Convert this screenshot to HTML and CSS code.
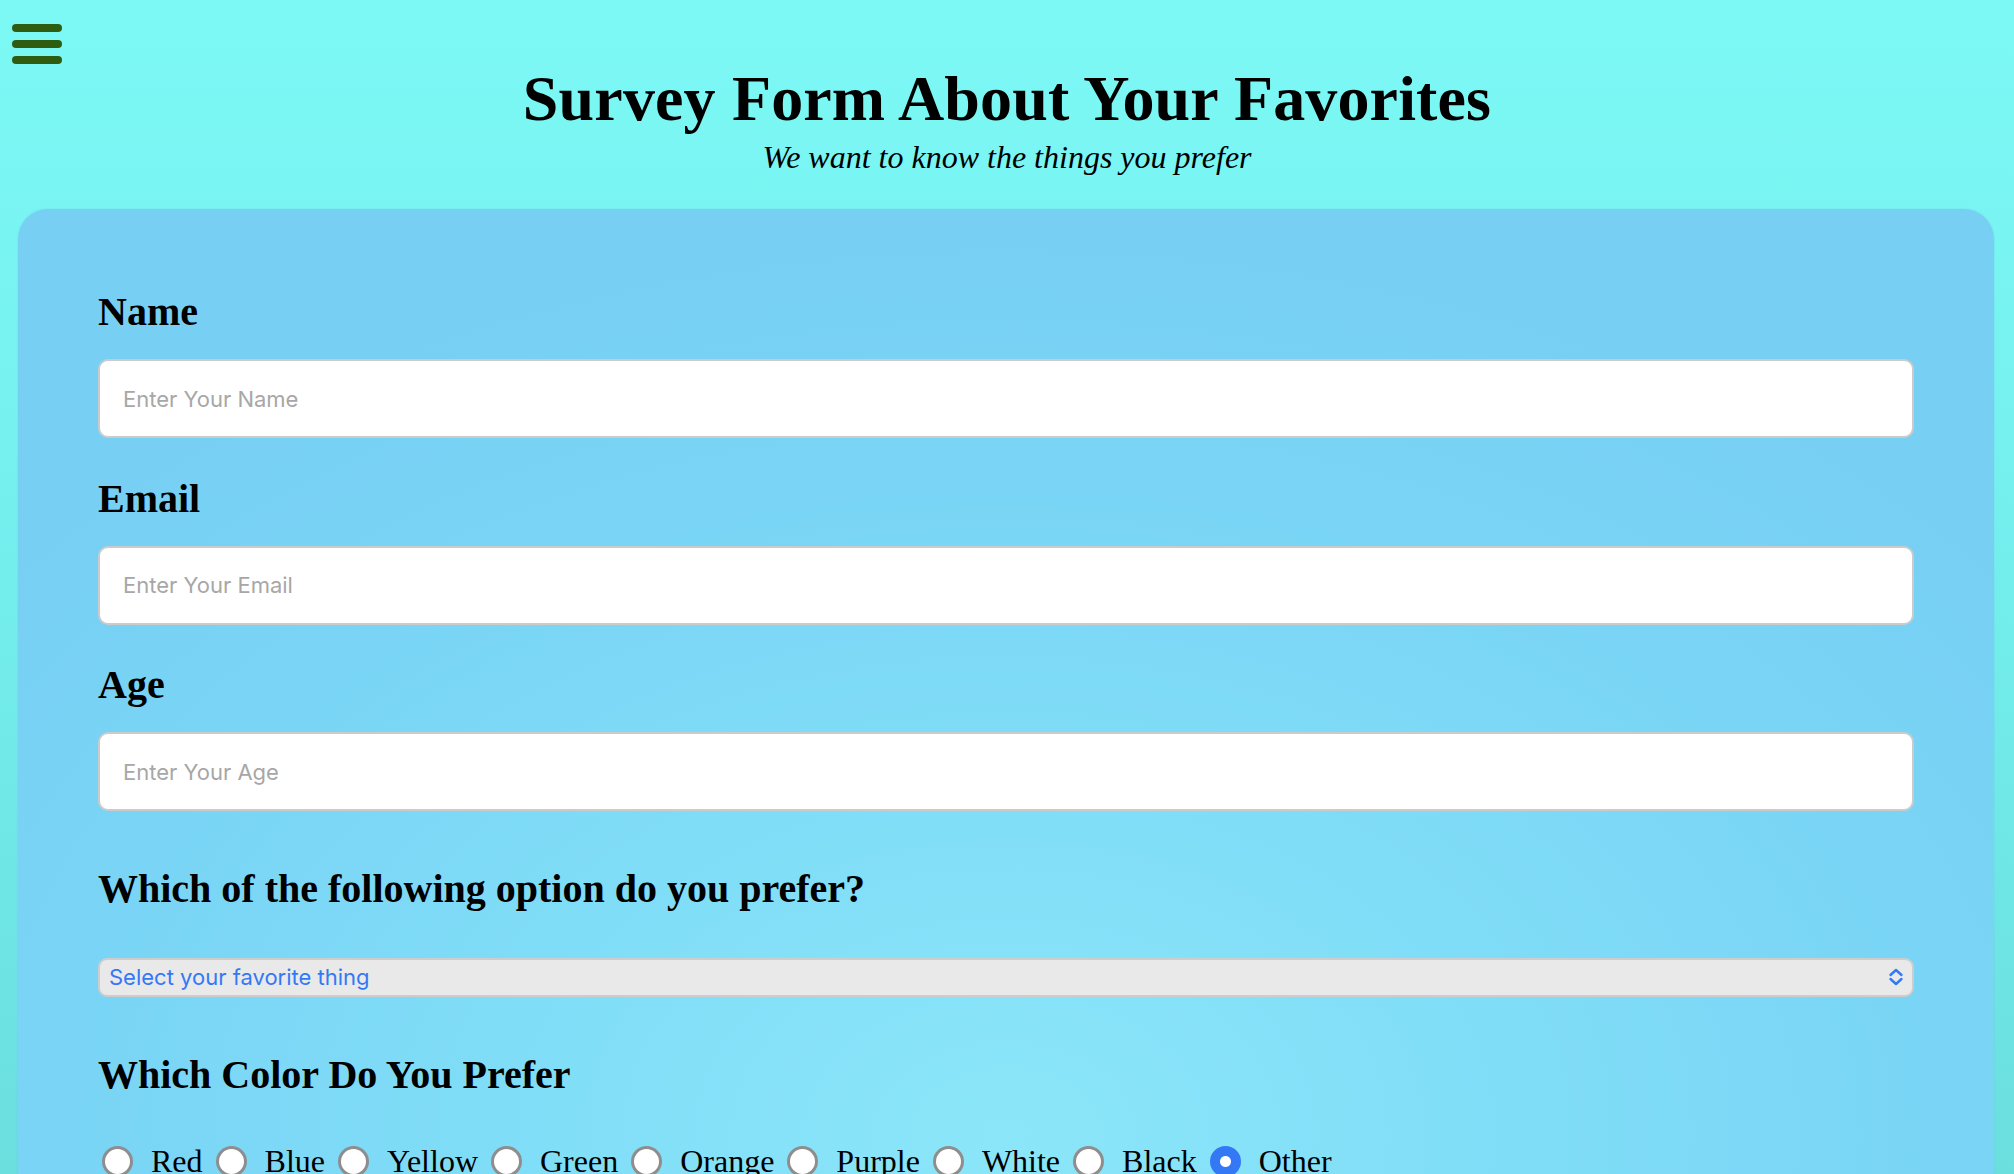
FILE: index.html
```html
<!DOCTYPE html>
<html lang="en">
<head>
<meta charset="utf-8">
<title>Survey Form About Your Favorites</title>
<link rel="stylesheet" href="styles.css">
</head>
<body>
  <button class="menu-btn" aria-label="Menu">
    <span></span><span></span><span></span>
  </button>
  <header class="page-header">
    <h1 class="title">Survey Form About Your Favorites</h1>
    <p class="subtitle">We want to know the things you prefer</p>
  </header>
  <main class="card">
    <form class="survey">
      <div class="field">
        <label class="field-label" for="name">Name</label>
        <input class="text-input" id="name" type="text" placeholder="Enter Your Name">
      </div>
      <div class="field">
        <label class="field-label" for="email">Email</label>
        <input class="text-input" id="email" type="email" placeholder="Enter Your Email">
      </div>
      <div class="field">
        <label class="field-label" for="age">Age</label>
        <input class="text-input" id="age" type="number" placeholder="Enter Your Age">
      </div>
      <div class="question">
        <h2 class="question-title">Which of the following option do you prefer?</h2>
        <div class="select-wrap">
          <select class="select">
            <option>Select your favorite thing</option>
          </select>
          <svg class="select-icon" viewBox="0 0 16 18" width="16" height="18" aria-hidden="true">
            <path d="M2.5 7 L8 2 L13.5 7" fill="none" stroke="#3478f6" stroke-width="2.4" stroke-linecap="round" stroke-linejoin="round"/>
            <path d="M2.5 11 L8 16 L13.5 11" fill="none" stroke="#3478f6" stroke-width="2.4" stroke-linecap="round" stroke-linejoin="round"/>
          </svg>
        </div>
      </div>
      <div class="question">
        <h2 class="question-title">Which Color Do You Prefer</h2>
        <div class="radio-row">
          <label class="opt"><input type="radio" name="color" class="radio"><span>Red</span></label>
          <label class="opt"><input type="radio" name="color" class="radio"><span>Blue</span></label>
          <label class="opt"><input type="radio" name="color" class="radio"><span>Yellow</span></label>
          <label class="opt"><input type="radio" name="color" class="radio"><span>Green</span></label>
          <label class="opt"><input type="radio" name="color" class="radio"><span>Orange</span></label>
          <label class="opt"><input type="radio" name="color" class="radio"><span>Purple</span></label>
          <label class="opt"><input type="radio" name="color" class="radio"><span>White</span></label>
          <label class="opt"><input type="radio" name="color" class="radio"><span>Black</span></label>
          <label class="opt"><input type="radio" name="color" class="radio" checked><span>Other</span></label>
        </div>
      </div>
    </form>
  </main>
</body>
</html>
```

FILE: styles.css
```css
html, body {
  margin: 0;
  padding: 0;
}

body {
  min-height: 100vh;
  font-family: "Liberation Serif", "Times New Roman", serif;
  color: #000;
  background: linear-gradient(180deg, #7cf8f5 0%, #76f1f0 35%, #6fe6e6 70%, #6adcdc 100%);
}

.menu-btn {
  position: absolute;
  left: 12px;
  top: 24px;
  display: flex;
  flex-direction: column;
  gap: 8px;
  padding: 0;
  margin: 0;
  border: 0;
  background: none;
  cursor: pointer;
}

.menu-btn span {
  display: block;
  width: 50px;
  height: 8px;
  border-radius: 4px;
  background: #2e5c10;
}

.page-header {
  padding-top: 62px;
  text-align: center;
}

.title {
  margin: 0;
  font-size: 64px;
  line-height: 74px;
  font-weight: 700;
  letter-spacing: 0.15px;
}

.subtitle {
  margin: 3px 0 0;
  font-size: 32px;
  line-height: 37px;
  font-style: italic;
}

.card {
  margin: 33px 20px 0 18px;
  padding: 80px 80px 80px 80px;
  border-radius: 30px;
  background: radial-gradient(ellipse 65% 85% at 50% 88%, #8be6f9 0%, #80ddf7 40%, #79d4f5 75%, #77d0f4 100%);
  box-shadow: 0 0 2px rgba(80, 150, 200, 0.25);
}

.survey {
  display: flex;
  flex-direction: column;
}

.field {
  display: flex;
  flex-direction: column;
  margin-bottom: 37.7px;
}

.field-label {
  font-size: 40px;
  line-height: 46px;
  font-weight: 700;
  margin-bottom: 24px;
}

.text-input {
  box-sizing: border-box;
  width: 100%;
  height: 79px;
  margin: 0;
  padding: 0 23px;
  border: 2px solid #cbcbcb;
  border-radius: 10px;
  background: #fff;
  font-family: Inter, "Noto Sans", sans-serif;
  font-size: 22px;
  color: #222;
  outline: none;
}

.text-input::placeholder {
  color: #a7a7a7;
}

.question {
  margin-top: 17px;
}

.question + .question {
  margin-top: 55px;
}

.question-title {
  margin: 0 0 45.5px;
  font-size: 40px;
  line-height: 46px;
  font-weight: 700;
}

.select-wrap {
  position: relative;
}

.select {
  -webkit-appearance: none;
  appearance: none;
  box-sizing: border-box;
  display: block;
  width: 100%;
  height: 39px;
  margin: 0;
  padding: 0 40px 0 9px;
  border: 2px solid #cdcdcd;
  border-radius: 9px;
  background: #e9e9e9;
  color: #3478f6;
  font-family: Inter, "Noto Sans", sans-serif;
  font-size: 22px;
  outline: none;
}

.select-icon {
  position: absolute;
  right: 10px;
  top: 10.5px;
  pointer-events: none;
}

.radio-row {
  display: flex;
  flex-wrap: wrap;
  align-items: center;
  font-size: 32px;
  line-height: 37px;
}

.opt {
  display: flex;
  align-items: center;
}

.opt span {
  margin-right: 13px;
}

.opt:first-child .radio {
  margin-left: 4px;
}

.radio {
  -webkit-appearance: none;
  appearance: none;
  box-sizing: border-box;
  width: 31px;
  height: 31px;
  margin: 0 18px 0 0;
  border: 3px solid #8e8e8e;
  border-radius: 50%;
  background: #fff;
}

.radio:checked {
  border-color: #3478f6;
  background: radial-gradient(circle, #fff 0 5px, #3478f6 6px);
}
```
